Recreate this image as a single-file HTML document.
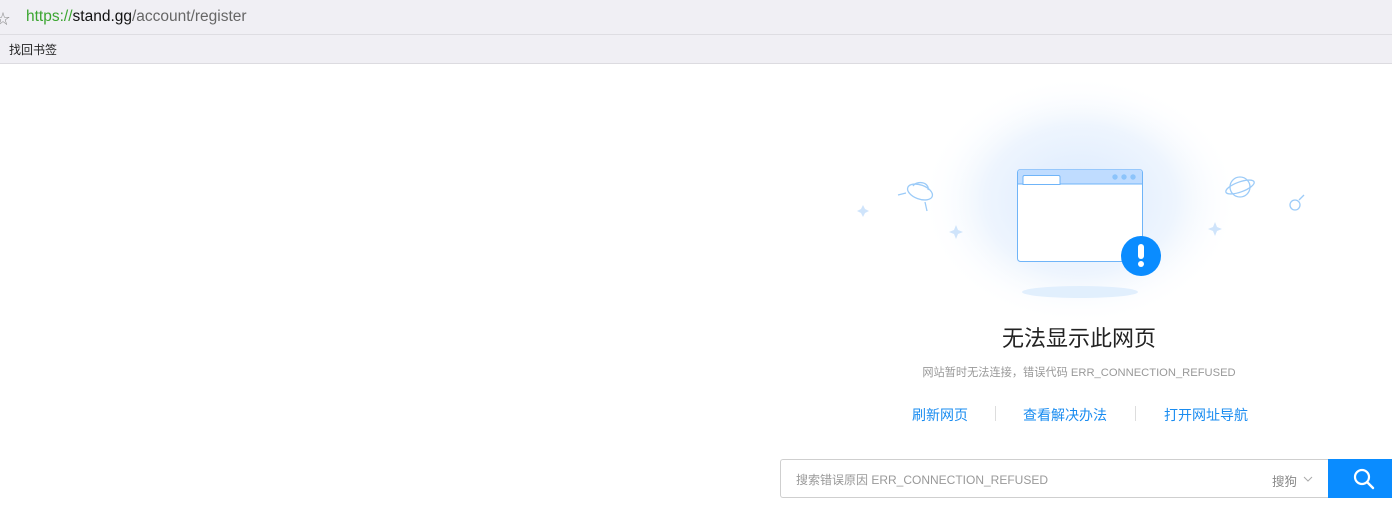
<!DOCTYPE html>
<html><head><meta charset="utf-8"><style>
body{margin:0;width:1392px;height:523px;background:#fff;font-family:"Liberation Sans","Noto Sans CJK SC",sans-serif;position:relative;overflow:hidden}
.top{position:absolute;left:0;top:0;width:1392px;height:34px;background:#f0eff4;border-bottom:1px solid #dedde2}
.bm{position:absolute;left:0;top:35px;width:1392px;height:28px;background:#f0eff4;border-bottom:1px solid #dcdbe0}
.abs{position:absolute}
.t{white-space:nowrap}
</style></head><body>
<div class="top">
<div class="abs t" style="left:-4px;top:9px;font-size:14px;color:#888">☆</div>
<div class="abs t" style="left:26px;top:8px;font-size:15.5px;"><span style="color:#3aa52f">https://</span><span style="color:#111">stand.gg</span><span style="color:#666">/account/register</span></div>
</div>
<div class="bm"><div class="abs t" style="left:9px;top:6px;font-size:12px;color:#222">找回书签</div></div>

<svg class="abs" style="left:840px;top:80px" width="480" height="240">
<defs><radialGradient id="g" cx="50%" cy="50%" r="50%"><stop offset="0" stop-color="#dbeafd"/><stop offset="0.6" stop-color="#eef5fe"/><stop offset="1" stop-color="#fff" stop-opacity="0"/></radialGradient></defs>
<ellipse cx="240" cy="120" rx="160" ry="125" fill="url(#g)"/>
<ellipse cx="240" cy="212" rx="58" ry="6" fill="#e1effd"/>
<rect x="177.5" y="89.5" width="125" height="92" rx="3" fill="#fff" stroke="#6fb4f8"/>
<path d="M178 104V92a2.5 2.5 0 0 1 2.5-2.5h119a2.5 2.5 0 0 1 2.5 2.5V104z" fill="#bfdcff"/>
<path d="M183 104.5V97a1.5 1.5 0 0 1 1.5-1.5h34a1.5 1.5 0 0 1 1.5 1.5V104.5z" fill="#fff" stroke="#6fb4f8"/>
<line x1="178" y1="104" x2="183" y2="104" stroke="#6fb4f8"/><line x1="220" y1="104" x2="302" y2="104" stroke="#6fb4f8"/>
<circle cx="275" cy="97" r="2.7" fill="#8cc4fb"/><circle cx="284" cy="97" r="2.7" fill="#8cc4fb"/><circle cx="293" cy="97" r="2.7" fill="#8cc4fb"/>
<circle cx="301" cy="176" r="20" fill="#0a8cff"/>
<rect x="298" y="164" width="6" height="15" rx="3" fill="#fff"/><circle cx="301" cy="184" r="3" fill="#fff"/>
<g fill="#cfe4fb">
<path d="M23 125l2 4 4 2-4 2-2 4-2-4-4-2 4-2z"/>
<path d="M116 145l2 5 5 2-5 2-2 5-2-5-5-2 5-2z"/>
<path d="M375 142l2 5 5 2-5 2-2 5-2-5-5-2 5-2z"/>
</g>
<g fill="none" stroke="#9ccbf8" stroke-width="1.3">
<ellipse cx="80" cy="112" rx="13" ry="7" transform="rotate(20 80 112)"/>
<path d="M73 106a8 6 0 0 1 15 4"/>
<path d="M58 115l8-2M85 122l2 9"/>
<circle cx="400" cy="107" r="10"/>
<ellipse cx="400" cy="107" rx="15" ry="5" transform="rotate(-20 400 107)"/>
<circle cx="455" cy="125" r="5"/><path d="M459 120l5-5"/>
</g>
</svg>

<div class="abs t" style="left:0;width:2158px;text-align:center;top:321px;font-size:22px;color:#222">无法显示此网页</div>
<div class="abs t" style="left:0;width:2158px;text-align:center;top:364px;font-size:11.2px;color:#999">网站暂时无法连接，错误代码 ERR_CONNECTION_REFUSED</div>
<div class="abs t" style="left:912px;top:405px;font-size:14px;color:#1a8cf0">刷新网页</div>
<div class="abs" style="left:995px;top:406px;width:1px;height:15px;background:#ddd"></div>
<div class="abs t" style="left:1023px;top:405px;font-size:14px;color:#1a8cf0">查看解决办法</div>
<div class="abs" style="left:1135px;top:406px;width:1px;height:15px;background:#ddd"></div>
<div class="abs t" style="left:1164px;top:405px;font-size:14px;color:#1a8cf0">打开网址导航</div>

<div class="abs" style="left:780px;top:459px;width:547px;height:37px;border:1px solid #cfcfcf;border-right:none;border-radius:3px 0 0 3px"></div>
<div class="abs t" style="left:796px;top:471px;font-size:12px;color:#999">搜索错误原因 ERR_CONNECTION_REFUSED</div>
<div class="abs t" style="left:1272px;top:471px;font-size:12.5px;color:#888">搜狗</div>
<svg class="abs" style="left:1303px;top:476px" width="10" height="7"><path d="M1 1l4 4 4-4" fill="none" stroke="#aaa"/></svg>
<div class="abs" style="left:1328px;top:459px;width:64px;height:39px;background:#0a8cff"></div>
<svg class="abs" style="left:1352px;top:467px" width="24" height="24"><circle cx="10" cy="10" r="7" fill="none" stroke="#fff" stroke-width="2.2"/><path d="M15 15l6 6" stroke="#fff" stroke-width="2.4" stroke-linecap="round"/></svg>
</body></html>
